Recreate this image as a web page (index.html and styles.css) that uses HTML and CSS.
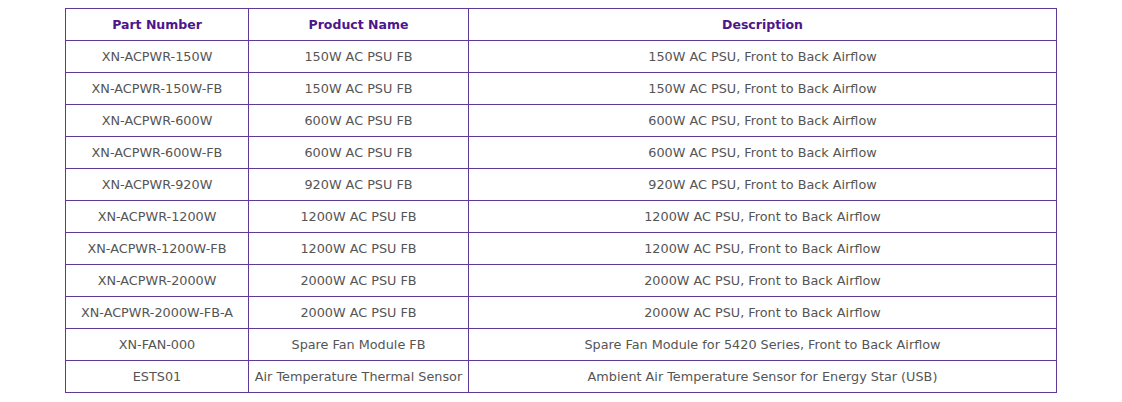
FILE: index.html
```html
<!DOCTYPE html>
<html>
<head>
<meta charset="utf-8">
<link rel="stylesheet" href="styles.css">
</head>
<body>
<table class="spec">
  <colgroup>
    <col class="c1"><col class="c2"><col class="c3">
  </colgroup>
  <thead>
    <tr><th>Part Number</th><th>Product Name</th><th>Description</th></tr>
  </thead>
  <tbody>
    <tr><td>XN-ACPWR-150W</td><td>150W AC PSU FB</td><td>150W AC PSU, Front to Back Airflow</td></tr>
    <tr><td>XN-ACPWR-150W-FB</td><td>150W AC PSU FB</td><td>150W AC PSU, Front to Back Airflow</td></tr>
    <tr><td>XN-ACPWR-600W</td><td>600W AC PSU FB</td><td>600W AC PSU, Front to Back Airflow</td></tr>
    <tr><td>XN-ACPWR-600W-FB</td><td>600W AC PSU FB</td><td>600W AC PSU, Front to Back Airflow</td></tr>
    <tr><td>XN-ACPWR-920W</td><td>920W AC PSU FB</td><td>920W AC PSU, Front to Back Airflow</td></tr>
    <tr><td>XN-ACPWR-1200W</td><td>1200W AC PSU FB</td><td>1200W AC PSU, Front to Back Airflow</td></tr>
    <tr><td>XN-ACPWR-1200W-FB</td><td>1200W AC PSU FB</td><td>1200W AC PSU, Front to Back Airflow</td></tr>
    <tr><td>XN-ACPWR-2000W</td><td>2000W AC PSU FB</td><td>2000W AC PSU, Front to Back Airflow</td></tr>
    <tr><td>XN-ACPWR-2000W-FB-A</td><td>2000W AC PSU FB</td><td>2000W AC PSU, Front to Back Airflow</td></tr>
    <tr><td>XN-FAN-000</td><td>Spare Fan Module FB</td><td>Spare Fan Module for 5420 Series, Front to Back Airflow</td></tr>
    <tr><td>ESTS01</td><td>Air Temperature Thermal Sensor</td><td>Ambient Air Temperature Sensor for Energy Star (USB)</td></tr>
  </tbody>
</table>
</body>
</html>
```
FILE: styles.css
```css
html, body {
  margin: 0;
  padding: 0;
  background: #ffffff;
}
body {
  padding-top: 8px;
  font-family: "DejaVu Sans", "Open Sans", sans-serif;
}
.spec {
  width: 991px;
  margin: 0 auto;
  border-collapse: collapse;
  table-layout: fixed;
}
.c1 { width: 183px; }
.c2 { width: 220px; }
.c3 { width: 588px; }
.spec th,
.spec td {
  height: 32px;
  padding: 0 4px;
  border: 1px solid #5e3a94;
  text-align: center;
  vertical-align: middle;
  white-space: nowrap;
  box-sizing: border-box;
}
.spec th {
  font-size: 12.5px;
  font-weight: 700;
  color: #4b168c;
}
.spec td {
  font-size: 12.8px;
  font-weight: 400;
  color: #555555;
}
```
